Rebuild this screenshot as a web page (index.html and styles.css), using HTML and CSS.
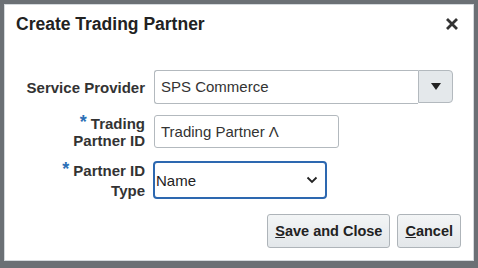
FILE: index.html
```html
<!DOCTYPE html>
<html lang="en">
<head>
    <meta charset="UTF-8">
    <title>Create Trading Partner</title>
    <link rel="stylesheet" href="styles.css">
</head>
<body>
    <div class="dialog">
        <div class="dialog-header">
            <h1>Create Trading Partner</h1>
            <button class="close-button" aria-label="Close">
                <svg width="14" height="14" viewBox="0 0 14 14">
                    <path d="M2 2 L12 12 M12 2 L2 12" stroke="#333" stroke-width="2.8" stroke-linecap="butt"/>
                </svg>
            </button>
        </div>

        <div class="form">
            <label class="form-label">Service Provider</label>
            <div class="combo">
                <div class="combo-value">SPS Commerce</div>
                <div class="combo-button">
                    <svg width="10" height="7" viewBox="0 0 10 7"><path d="M0 0 L10 0 L5 7 Z" fill="#222"/></svg>
                </div>
            </div>

            <label class="form-label"><span class="required">*</span> Trading<br>Partner ID</label>
            <div class="text-input">Trading Partner &Lambda;</div>

            <label class="form-label tall"><span class="required">*</span> Partner ID<br>Type</label>
            <div class="choice">
                <span>Name</span>
                <svg width="12" height="8" viewBox="0 0 12 8"><path d="M1.5 1.5 L6 6 L10.5 1.5" fill="none" stroke="#222" stroke-width="1.8"/></svg>
            </div>
        </div>

        <div class="dialog-footer">
            <button class="button"><u>S</u>ave and Close</button>
            <button class="button"><u>C</u>ancel</button>
        </div>
    </div>
</body>
</html>
```

FILE: styles.css
```css
body {
    margin: 0;
    background-color: #6b7075;
    font-family: "Liberation Sans", Arial, sans-serif;
    color: #333333;
}

.dialog {
    box-sizing: border-box;
    width: 470px;
    height: 257px;
    margin: 4px 0 0 4px;
    background-color: #ffffff;
    border: 1px solid #d4d9dd;
    display: flex;
    flex-direction: column;
}

.dialog-header {
    display: flex;
    justify-content: space-between;
    align-items: center;
    padding: 5px 14px 0 11px;
    height: 28px;
}

.dialog-header h1 {
    margin: 0;
    font-size: 17.5px;
    font-weight: bold;
    color: #222222;
}

.close-button {
    background: none;
    border: none;
    padding: 0;
    display: flex;
}

.form {
    display: grid;
    grid-template-columns: 140px auto;
    column-gap: 9px;
    row-gap: 10px;
    align-items: center;
    justify-items: start;
    margin-top: 32px;
}

.form-label {
    justify-self: end;
    text-align: right;
    font-size: 15px;
    font-weight: bold;
    line-height: 17px;
    color: #333333;
}

.form-label.tall {
    line-height: 20px;
}

.required {
    color: #2c6fb6;
    font-size: 18px;
    vertical-align: 1px;
}

.combo {
    display: flex;
    height: 34px;
}

.combo-value {
    box-sizing: border-box;
    width: 264px;
    border: 1px solid #b3b9be;
    border-right: none;
    border-radius: 3px 0 0 3px;
    padding: 0 6px;
    font-size: 15px;
    line-height: 32px;
}

.combo-button {
    box-sizing: border-box;
    width: 35px;
    height: 33px;
    background-color: #e4e8eb;
    border: 1px solid #b3b9be;
    border-radius: 0 4px 4px 0;
    display: flex;
    align-items: center;
    justify-content: center;
}

.text-input {
    box-sizing: border-box;
    width: 185px;
    height: 33px;
    border: 1px solid #b3b9be;
    border-radius: 3px;
    padding: 0 6px;
    font-size: 15px;
    line-height: 31px;
}

.choice {
    box-sizing: border-box;
    width: 174px;
    height: 38px;
    margin-left: -1px;
    border: 2px solid #2d68b0;
    border-radius: 4px;
    padding: 0 7px 0 1px;
    display: flex;
    justify-content: space-between;
    align-items: center;
    font-size: 15px;
    color: #222222;
}

.dialog-footer {
    display: flex;
    justify-content: flex-end;
    gap: 7px;
    padding: 13px 12px 0 0;
}

.button {
    height: 34px;
    padding: 0 7px;
    font-family: "Liberation Sans", Arial, sans-serif;
    font-size: 14.5px;
    font-weight: bold;
    color: #222222;
    background: linear-gradient(#f3f5f6, #e3e7ea);
    border: 1px solid #aeb4b9;
    border-radius: 3px;
}
```
